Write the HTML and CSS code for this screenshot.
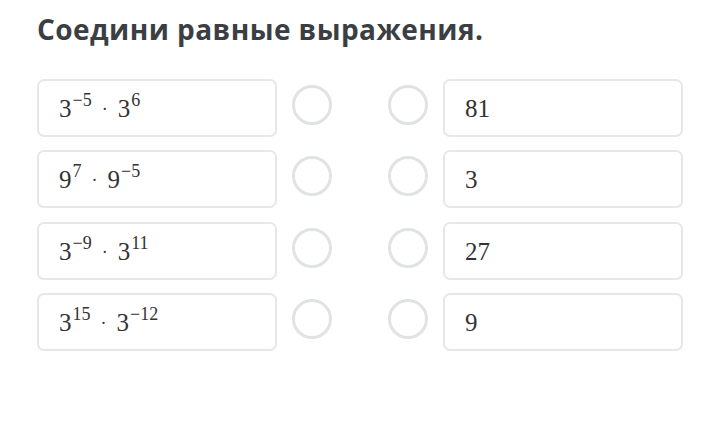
FILE: index.html
```html
<!DOCTYPE html>
<html lang="ru">
<head>
<meta charset="utf-8">
<link rel="stylesheet" href="styles.css">
</head>
<body>
<div class="page">
  <h1 class="title">Соедини равные выражения.</h1>
  <div class="grid">
    <div class="row">
      <div class="box"><span class="m">3<sup>−5</sup><span class="dot">·</span>3<sup>6</sup></span></div>
      <span class="circ"></span>
      <span class="circ"></span>
      <div class="box"><span class="m">81</span></div>
    </div>
    <div class="row row-wide">
      <div class="box"><span class="m">9<sup>7</sup><span class="dot">·</span>9<sup>−5</sup></span></div>
      <span class="circ"></span>
      <span class="circ"></span>
      <div class="box"><span class="m">3</span></div>
    </div>
    <div class="row">
      <div class="box"><span class="m">3<sup>−9</sup><span class="dot">·</span>3<sup>11</sup></span></div>
      <span class="circ"></span>
      <span class="circ"></span>
      <div class="box"><span class="m">27</span></div>
    </div>
    <div class="row">
      <div class="box"><span class="m">3<sup>15</sup><span class="dot">·</span>3<sup>−12</sup></span></div>
      <span class="circ"></span>
      <span class="circ"></span>
      <div class="box"><span class="m">9</span></div>
    </div>
  </div>
</div>
</body>
</html>
```
FILE: styles.css
```css
html, body {
  margin: 0;
  padding: 0;
  background: #ffffff;
}
.page {
  padding: 11px 0 0 37px;
  width: 647px;
}
.title {
  margin: 0;
  font-family: "Open Sans", sans-serif;
  font-weight: 700;
  font-size: 28px;
  line-height: 36px;
  color: #3b3f43;
  letter-spacing: 0.45px;
}
.grid {
  margin-top: 32px;
  display: flex;
  flex-direction: column;
  gap: 13px;
}
.row {
  display: flex;
  align-items: center;
  height: 58px;
}
.row-wide {
  margin-bottom: 1px;
}
.box {
  box-sizing: border-box;
  width: 240px;
  height: 58px;
  border: 2px solid #e6e7e7;
  border-radius: 7px;
  padding: 16px 0 0 20px;
}
.m {
  display: block;
  font-family: "Liberation Serif", "DejaVu Serif", serif;
  font-size: 25px;
  color: #333333;
  line-height: 24px;
  white-space: nowrap;
}
.m sup {
  font-size: 18px;
  line-height: 0;
  vertical-align: 0;
  position: relative;
  top: -11px;
  margin-left: 1px;
}
.dot {
  margin: 0 10px 0 10px;
  font-size: 18px;
  position: relative;
  top: -2px;
}
.circ {
  box-sizing: border-box;
  width: 40px;
  height: 40px;
  border-radius: 50%;
  border: 3px solid #e1e3e3;
  margin-top: -6px;
}
.circ:nth-child(2) {
  margin-left: 15px;
}
.circ:nth-child(3) {
  margin-left: 56px;
  margin-right: 15px;
}
```
